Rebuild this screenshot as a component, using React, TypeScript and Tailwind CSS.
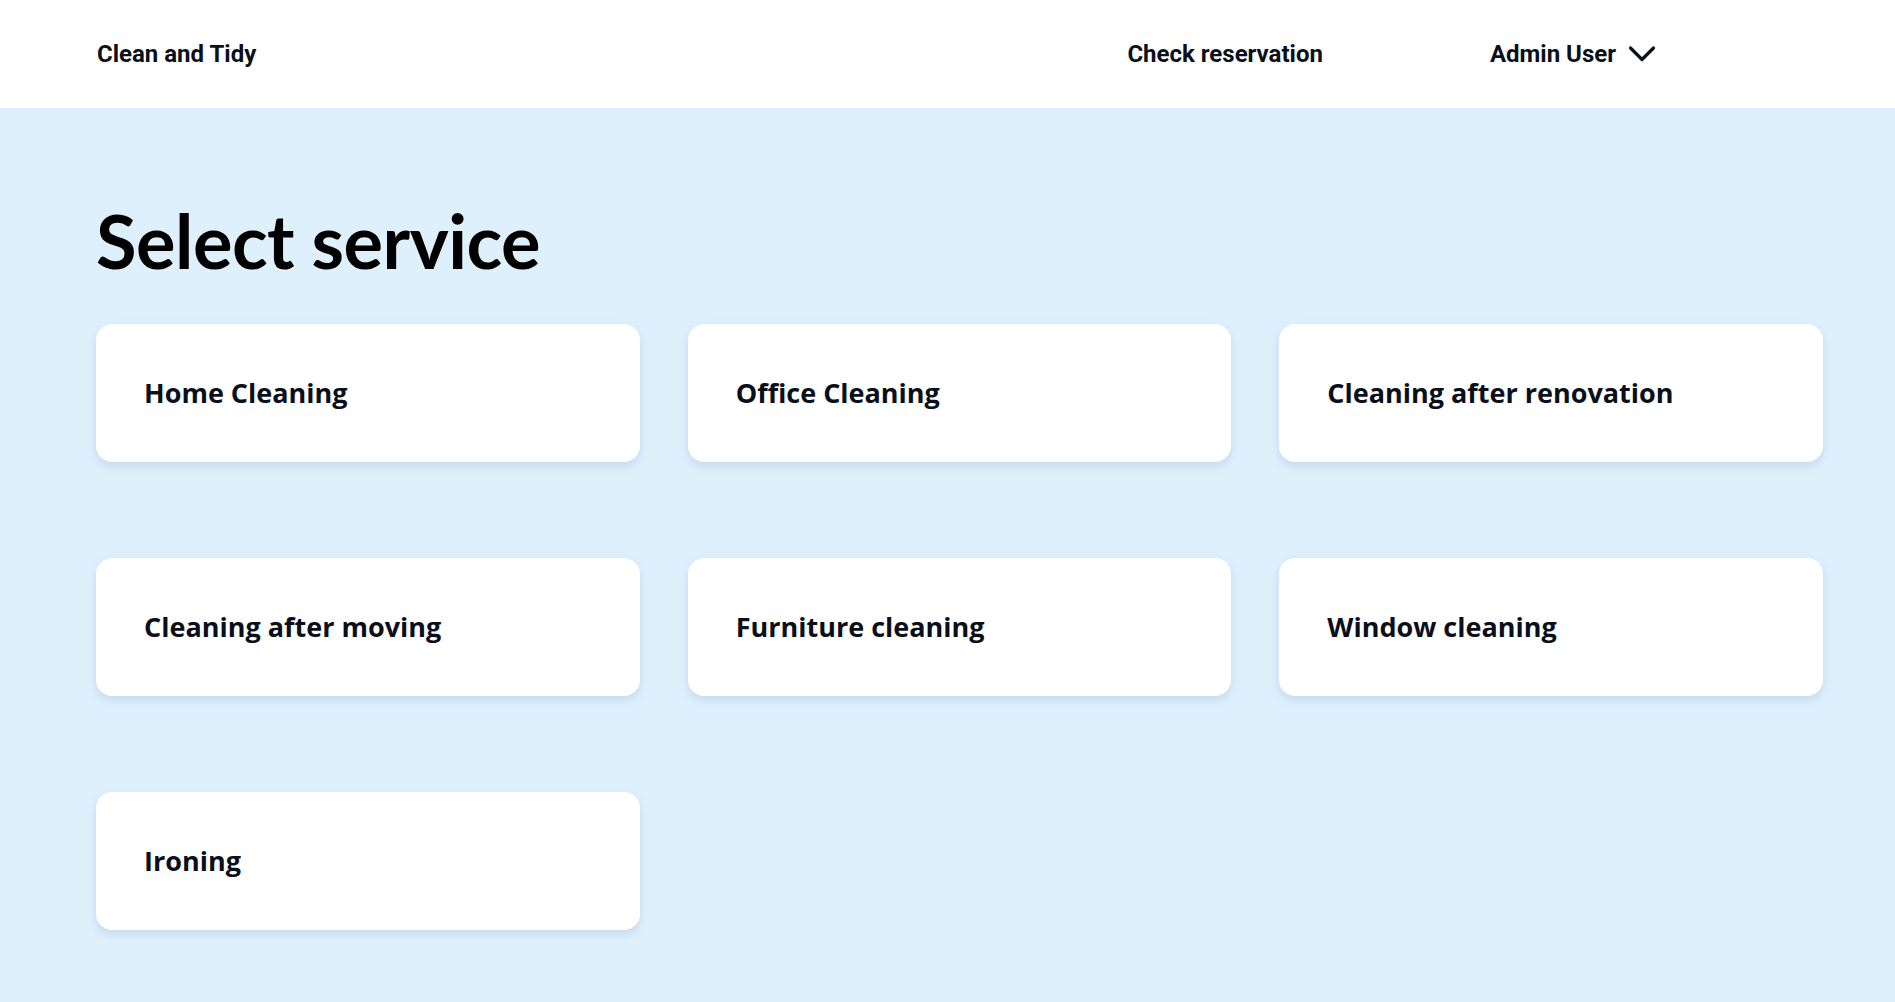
const services = [
  "Home Cleaning",
  "Office Cleaning",
  "Cleaning after renovation",
  "Cleaning after moving",
  "Furniture cleaning",
  "Window cleaning",
  "Ironing",
];

function Header() {
  return (
    <header className="h-[108px] bg-white flex items-center pl-[97px] pr-[239px] font-['Roboto',sans-serif] text-[24px] font-bold text-[#0b0f1a]">
      <a className="cursor-pointer">Clean and Tidy</a>
      <nav className="ml-auto flex items-center">
        <a className="cursor-pointer">Check reservation</a>
        <button className="ml-[167px] flex items-center gap-[12px]">
          Admin User
          <svg width="28" height="18" viewBox="0 0 28 18" fill="none">
            <path d="M2.5 3l11.5 11.5L25.5 3" stroke="currentColor" strokeWidth="3.2" strokeLinecap="round" strokeLinejoin="round" />
          </svg>
        </button>
      </nav>
    </header>
  );
}

export default function App() {
  return (
    <div className="min-h-screen bg-[#dff0fd] font-['Lato',sans-serif]">
      <Header />
      <main className="pl-[96px] pr-[72px] pt-[96px] pb-[40px]">
        <h1 className="text-[74px] leading-none font-bold text-black tracking-[-0.5px]">Select service</h1>
        <div className="mt-[46px] grid grid-cols-3 gap-x-[48px] gap-y-[96px]">
          {services.map((s) => (
            <div
              key={s}
              className="h-[138px] bg-white rounded-[16px] shadow-[0_4px_10px_rgba(120,150,180,0.25)] flex items-center px-[48px] cursor-pointer"
            >
              <span className="font-['Open_Sans',sans-serif] text-[27px] font-bold text-[#0b0f1a]">{s}</span>
            </div>
          ))}
        </div>
      </main>
    </div>
  );
}
